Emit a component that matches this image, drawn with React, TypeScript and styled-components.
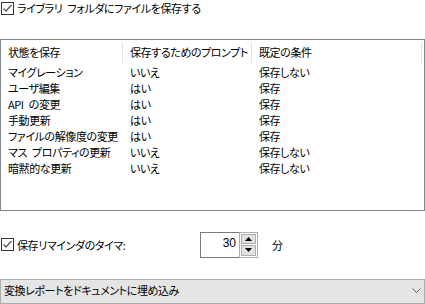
import styled, { createGlobalStyle } from "styled-components";

const GlobalStyle = createGlobalStyle`
    html, body {
        margin: 0;
        padding: 0;
        background: #fff;
        overflow: hidden;
    }
    body {
        font-family: "Noto Sans CJK JP", "Liberation Sans", sans-serif;
        font-size: 11px;
        letter-spacing: -0.4px;
        word-spacing: 3px;
        color: #000;
        font-feature-settings: "palt";
    }
`;

const Page = styled.div`
    width: 425px;
    height: 304px;
    display: flex;
    flex-direction: column;
`;

const CheckRow = styled.label<{ $top: number }>`
    display: flex;
    align-items: center;
    gap: 3px;
    height: 14px;
    margin-top: ${(p) => p.$top}px;
    padding-left: 1px;
    line-height: 14px;
    white-space: pre;
`;

const Box = styled.span`
    width: 11px;
    height: 11px;
    border: 1px solid #333;
    background: #fff;
    display: flex;
    align-items: center;
    justify-content: center;
    flex: none;
`;

const ListBox = styled.div`
    margin-top: 24px;
    height: 175px;
    width: 423px;
    border: 1px solid #828790;
    background: #fff;
`;

const Row = styled.div<{ $head?: boolean }>`
    display: grid;
    grid-template-columns: 122px 129px 170px;
    height: ${(p) => (p.$head ? 24 : 16)}px;
    align-items: center;
`;

const Cell = styled.div<{ $head?: boolean }>`
    padding-left: 7px;
    height: ${(p) => (p.$head ? 21 : 16)}px;
    line-height: ${(p) => (p.$head ? 21 : 16)}px;
    border-right: ${(p) => (p.$head ? "1px solid #e5e5e5" : "1px solid transparent")};
    white-space: pre;
    overflow: hidden;
`;

const TimerRow = styled.div`
    display: flex;
    align-items: center;
    margin-top: 21px;
    height: 26px;
`;

const TimerLabel = styled(CheckRow)`
    margin-top: 0;
    width: 199px;
`;

const Spinner = styled.div`
    display: flex;
    height: 26px;
`;

const SpinInput = styled.div`
    width: 35px;
    height: 24px;
    border: 1px solid #7a7a7a;
    border-right: none;
    padding-right: 3px;
    text-align: right;
    line-height: 20px;
    font-family: "Liberation Sans", sans-serif;
    font-size: 12px;
    letter-spacing: 0;
`;

const SpinButtons = styled.div`
    display: flex;
    flex-direction: column;
    width: 19px;
    height: 26px;
    border: 1px solid #adadad;
    box-sizing: border-box;
    padding: 1px;
    gap: 1px;
`;

const SpinButton = styled.div`
    flex: 1;
    background: #e1e1e1;
    border: 1px solid #adadad;
    display: flex;
    align-items: center;
    justify-content: center;
`;

const Unit = styled.span`
    margin-left: 14px;
`;

const Combo = styled.div`
    margin-top: 21px;
    height: 22px;
    width: 417px;
    border: 1px solid #adadad;
    background: #e5e5e5;
    display: flex;
    align-items: center;
    justify-content: space-between;
    padding: 0 3px 2px 3px;
    line-height: 16px;
`;

const Check = () => (
    <svg width="11" height="11" viewBox="0 0 11 11">
        <polyline points="1.5,5.5 4,8 9.5,2" fill="none" stroke="#555" strokeWidth="1.3" />
    </svg>
);

const rows = [
    ["マイグレーション", "いいえ", "保存しない"],
    ["ユーザ編集", "はい", "保存"],
    ["API の変更", "はい", "保存"],
    ["手動更新", "はい", "保存"],
    ["ファイルの解像度の変更", "はい", "保存"],
    ["マス プロパティの更新", "いいえ", "保存しない"],
    ["暗黙的な更新", "いいえ", "保存しない"],
];

export default function App() {
    return (
        <Page>
            <GlobalStyle />
            <CheckRow $top={1}>
                <Box>
                    <Check />
                </Box>
                ライブラリ フォルダにファイルを保存する
            </CheckRow>
            <ListBox>
                <Row $head>
                    <Cell $head>状態を保存</Cell>
                    <Cell $head>保存するためのプロンプト</Cell>
                    <Cell $head>既定の条件</Cell>
                </Row>
                {rows.map((r, i) => (
                    <Row key={i}>
                        <Cell>{r[0]}</Cell>
                        <Cell>{r[1]}</Cell>
                        <Cell>{r[2]}</Cell>
                    </Row>
                ))}
            </ListBox>
            <TimerRow>
                <TimerLabel $top={0}>
                    <Box>
                        <Check />
                    </Box>
                    保存リマインダのタイマ:
                </TimerLabel>
                <Spinner>
                    <SpinInput>30</SpinInput>
                    <SpinButtons>
                        <SpinButton>
                            <svg width="7" height="4" viewBox="0 0 7 4">
                                <polygon points="0,4 3.5,0 7,4" fill="#000" />
                            </svg>
                        </SpinButton>
                        <SpinButton>
                            <svg width="7" height="4" viewBox="0 0 7 4">
                                <polygon points="0,0 3.5,4 7,0" fill="#000" />
                            </svg>
                        </SpinButton>
                    </SpinButtons>
                </Spinner>
                <Unit>分</Unit>
            </TimerRow>
            <Combo>
                <span>変換レポートをドキュメントに埋め込み</span>
                <svg width="9" height="5" viewBox="0 0 9 5">
                    <polyline points="0.5,0.5 4.5,4.5 8.5,0.5" fill="none" stroke="#666" strokeWidth="1" />
                </svg>
            </Combo>
        </Page>
    );
}
